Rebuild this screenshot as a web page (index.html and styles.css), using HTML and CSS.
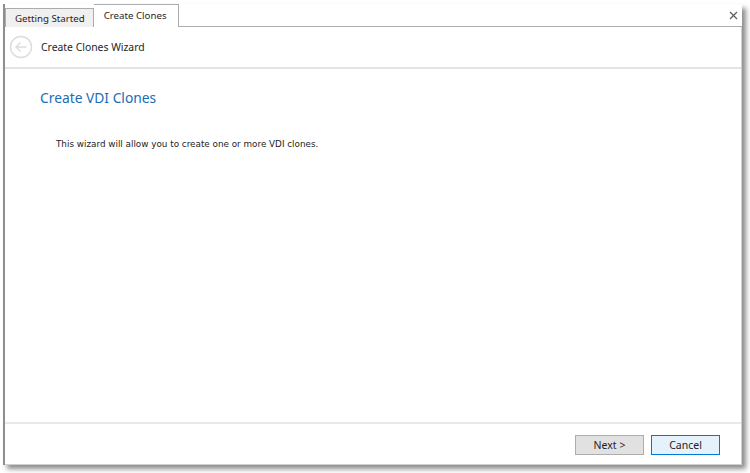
FILE: index.html
```html
<!DOCTYPE html>
<html lang="en">
<head>
  <meta charset="utf-8">
  <title>Create Clones</title>
  <link rel="stylesheet" href="styles.css">
</head>
<body>
  <div class="window">
    <div class="tab-strip">
      <div class="tab">Getting Started</div>
      <div class="tab active">Create Clones</div>
      <div class="tab-fill">
        <span class="close" aria-label="Close">
          <svg width="9" height="9" viewBox="0 0 9 9">
            <path d="M1 1l7 7M8 1l-7 7" stroke="#5f5f5f" stroke-width="1.3"/>
          </svg>
        </span>
      </div>
    </div>

    <div class="wizard">
      <div class="wizard-header">
        <button class="back-button" aria-label="Back">
          <svg width="24" height="24" viewBox="0 0 24 24">
            <circle cx="12" cy="12" r="10.5" fill="none" stroke="#dcdcdc" stroke-width="1.4"/>
            <path d="M17.5 12H7M11.5 7.5L7 12l4.5 4.5" fill="none" stroke="#dcdcdc" stroke-width="1.4"/>
          </svg>
        </button>
        <span class="wizard-title">Create Clones Wizard</span>
      </div>

      <div class="wizard-body">
        <h2 class="page-title">Create VDI Clones</h2>
        <p class="page-text">This wizard will allow you to create one or more VDI clones.</p>
      </div>

      <div class="wizard-footer">
        <button class="btn">Next &gt;</button>
        <button class="btn btn-default">Cancel</button>
      </div>
    </div>
  </div>
</body>
</html>
```

FILE: styles.css
```css
body {
  margin: 0;
  width: 750px;
  height: 473px;
  background: #ffffff;
  font-family: "Noto Sans", "Open Sans", sans-serif;
  overflow: hidden;
}

.window {
  margin: 4px 0 0 3px;
  width: 739px;
  height: 461px;
  display: flex;
  flex-direction: column;
  background: #ffffff;
  border-left: 2px solid #8e8e8e;
  box-sizing: border-box;
  box-shadow: 4px 4px 5px rgba(0, 0, 0, 0.45);
}

.tab-strip {
  display: flex;
  align-items: flex-end;
  height: 23px;
  flex-shrink: 0;
}

.tab {
  height: 19px;
  padding: 0 8px 0 9px;
  font-size: 9.7px;
  line-height: 19px;
  color: #1e1e1e;
  background: #f0f0f0;
  border: 1px solid #acacac;
  border-bottom: none;
  box-sizing: border-box;
}

.tab.active {
  height: 23px;
  line-height: 21px;
  background: #ffffff;
  border-left: none;
  padding: 0 11px 0 10px;
}

.tab-fill {
  flex: 1;
  height: 23px;
  border-bottom: 1px solid #acacac;
  box-sizing: border-box;
  display: flex;
  align-items: center;
  justify-content: flex-end;
  padding-right: 4px;
}

.close {
  display: flex;
}

.wizard {
  flex: 1;
  display: flex;
  flex-direction: column;
  border-right: 1px solid #d0d0d0;
  border-bottom: 1px solid #d0d0d0;
}

.wizard-header {
  height: 40px;
  display: flex;
  align-items: center;
  gap: 8px;
  padding-left: 4px;
  border-bottom: 2px solid #e3e3e3;
  flex-shrink: 0;
}

.back-button {
  width: 24px;
  height: 24px;
  padding: 0;
  border: none;
  background: none;
  display: flex;
}

.wizard-title {
  font-size: 10.4px;
  color: #1e1e1e;
}

.wizard-body {
  flex: 1;
  padding: 19px 0 0 35px;
}

.page-title {
  margin: 0;
  font-size: 13.8px;
  font-weight: 400;
  color: #1a6cb4;
}

.page-text {
  margin: 32px 0 0 16px;
  font-family: "DejaVu Sans", sans-serif;
  font-size: 8.8px;
  color: #222222;
}

.wizard-footer {
  height: 42px;
  display: flex;
  align-items: center;
  justify-content: flex-end;
  gap: 7px;
  padding: 1px 21px 0 0;
  box-sizing: border-box;
  border-top: 2px solid #e8e8e8;
  flex-shrink: 0;
}

.btn {
  width: 69px;
  height: 20px;
  padding: 0;
  font-family: "Noto Sans", sans-serif;
  font-size: 10.5px;
  color: #1e1e1e;
  background: #e1e1e1;
  border: 1px solid #adadad;
}

.btn-default {
  border-color: #0078d7;
  background: #e5f1fb;
}
```
